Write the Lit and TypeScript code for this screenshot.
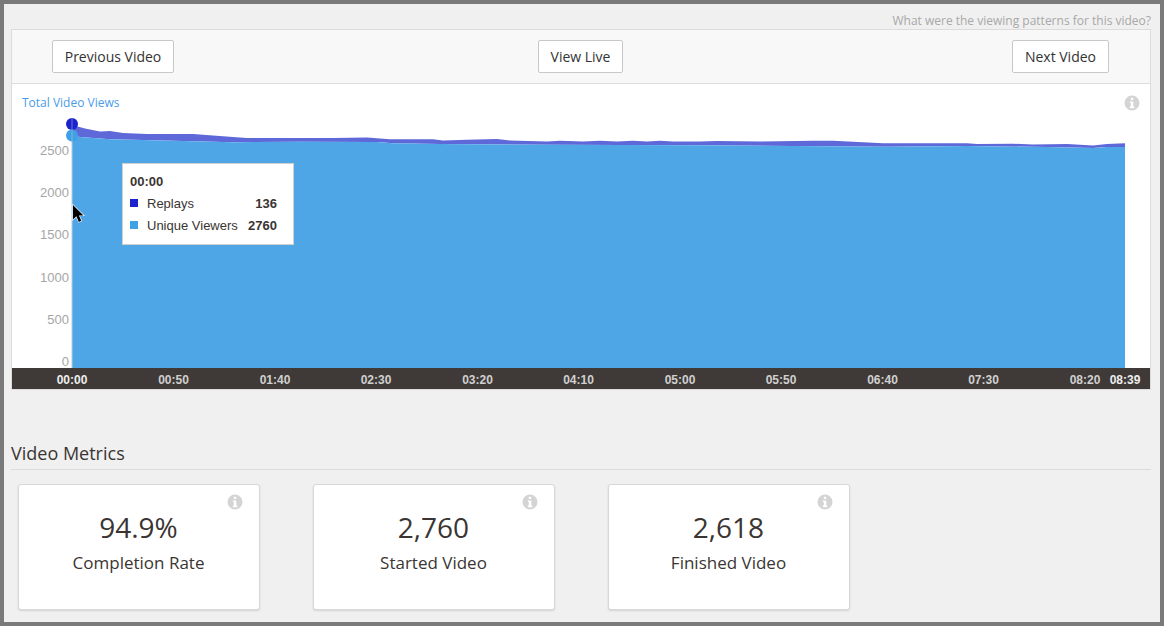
import { LitElement, html, css, svg } from 'lit';
import { customElement } from 'lit/decorators.js';

// chart geometry: svg viewBox uses page coordinates, so these read straight off the reference
const TOP_LINE: number[][] = [
  [72, 125], [85, 128.5], [100, 131.5], [110, 131], [123, 133], [147, 134], [193, 134], [233, 137], [247, 138],
  [300, 138], [333, 138], [367, 137.5], [390, 139.3], [433, 139.3], [443, 140.4], [467, 139.8], [497, 139],
  [510, 140.5], [547, 141.5], [560, 140.8], [583, 141.4], [600, 140.8], [617, 141.4], [633, 140.8], [647, 141.4],
  [660, 140.8], [673, 141.6], [700, 141.5], [717, 141], [760, 141.5], [813, 140.8], [833, 140.8], [883, 143.3],
  [967, 143.3], [977, 144], [1013, 143.7], [1033, 144.4], [1067, 144], [1093, 145.5], [1107, 143.9], [1125, 143.2],
];
const BASE_LINE: number[][] = [
  [72, 135.5], [80, 137], [110, 139.3], [143, 140], [233, 142.3], [300, 141.7], [377, 142], [393, 143.3],
  [440, 144], [547, 144.7], [700, 145.3], [887, 146.7], [967, 146], [1047, 147], [1093, 148], [1107, 147], [1125, 147],
];
const Y_TICKS = [
  { label: '2500', y: 155 },
  { label: '2000', y: 197 },
  { label: '1500', y: 239 },
  { label: '1000', y: 282 },
  { label: '500', y: 324 },
  { label: '0', y: 366 },
];
const X_TICKS = [
  { label: '00:00', x: 72, strong: true },
  { label: '00:50', x: 173.5 },
  { label: '01:40', x: 275 },
  { label: '02:30', x: 376 },
  { label: '03:20', x: 477.5 },
  { label: '04:10', x: 578.5 },
  { label: '05:00', x: 680 },
  { label: '05:50', x: 781 },
  { label: '06:40', x: 882.5 },
  { label: '07:30', x: 983.5 },
  { label: '08:20', x: 1085 },
  { label: '08:39', x: 1125, strong: true },
];
const METRICS = [
  { value: '94.9%', label: 'Completion Rate' },
  { value: '2,760', label: 'Started Video' },
  { value: '2,618', label: 'Finished Video' },
];

const toPath = (pts: number[][]) => pts.map(([x, y]) => `${x},${y}`).join(' L');

const infoIcon = () => html`
  <svg class="info" viewBox="0 0 16 16" width="16" height="16">
    <path
      fill-rule="evenodd"
      d="M8 .5a7.5 7.5 0 1 0 0 15 7.5 7.5 0 0 0 0-15ZM6.8 2.8h2.4v2.3H6.8ZM5.8 6.4h3.5v5.1h1v1.7H5.8v-1.7h1V8.1h-1Z"
    />
  </svg>
`;

@customElement('app-root')
export class AppRoot extends LitElement {
  static styles = css`
    :host {
      display: block;
      box-sizing: border-box;
      width: 1164px;
      height: 626px;
      border: 4px solid #7a7a7a;
      background: #f0f0f0;
      font-family: 'Open Sans', sans-serif;
      color: #3a3532;
      overflow: hidden;
    }

    .question {
      height: 25px;
      line-height: 34px;
      padding-right: 9px;
      text-align: right;
      font-size: 12px;
      color: #a8a8a8;
    }

    .panel {
      margin: 0 9px 0 7px;
      border: 1px solid #dcdcdc;
      background: #fff;
    }

    .toolbar {
      display: grid;
      grid-template-columns: 1fr auto 1fr;
      align-items: center;
      height: 53px;
      padding: 0 41px 0 40px;
      background: #f8f8f8;
      border-bottom: 1px solid #dcdcdc;
    }

    .toolbar button {
      height: 33px;
      padding: 0 12px;
      background: #fff;
      border: 1px solid #c8c8c8;
      border-radius: 2px;
      font: 14px 'Open Sans', sans-serif;
      color: #333;
    }

    .toolbar button:first-child {
      justify-self: start;
      width: 122px;
      padding: 0;
    }

    .toolbar button:last-child {
      justify-self: end;
    }

    .chart {
      position: relative;
    }

    .chart-head {
      display: flex;
      justify-content: space-between;
      align-items: flex-start;
      height: 34px;
      padding: 10px 10px 0 10px;
      box-sizing: border-box;
    }

    .chart-head .info {
      margin-top: 1px;
    }

    .chart-title {
      font-size: 12px;
      line-height: 18px;
      color: #4a9ce8;
    }

    .chart svg.plot {
      display: block;
    }

    .plot text {
      font: 13px 'Liberation Sans', sans-serif;
      fill: #a6a6a6;
      text-anchor: end;
    }

    .info {
      display: block;
      fill: #d4d4d4;
    }

    .tooltip {
      position: absolute;
      left: 110px;
      top: 79px;
      box-sizing: border-box;
      width: 172px;
      height: 82px;
      padding: 10px 16px 0 7px;
      background: #fff;
      border: 1px solid #cfcfcf;
      font: 13px 'Liberation Sans', sans-serif;
      color: #3a3532;
    }

    .tooltip b {
      display: block;
      line-height: 15px;
      margin-bottom: 3px;
    }

    .tip-row {
      display: flex;
      align-items: center;
      height: 22px;
    }

    .tip-row i {
      width: 8px;
      height: 8px;
      margin-right: 9px;
    }

    .tip-row span {
      flex: 1;
    }

    .replays {
      background: #1c22cc;
    }

    .unique {
      background: #3fa0e5;
    }

    .cursor {
      position: absolute;
      left: 60px;
      top: 120px;
    }

    .cursor path {
      paint-order: stroke;
    }

    .axis {
      position: relative;
      height: 21px;
      background: #3f3a37;
    }

    .axis span {
      position: absolute;
      top: 0;
      transform: translateX(-50%);
      font: bold 12px/24px 'Liberation Sans', sans-serif;
      color: #d0d0d0;
    }

    .axis span.strong {
      color: #eeeeee;
    }

    h2 {
      margin: 53px 9px 0 7px;
      height: 26px;
      border-bottom: 1px solid #dcdcdc;
      font-size: 18px;
      font-weight: 400;
      line-height: 21px;
      color: #3a3532;
    }

    .cards {
      display: flex;
      gap: 53px;
      margin: 14px 0 0 14px;
    }

    .card {
      position: relative;
      box-sizing: border-box;
      width: 242px;
      height: 126px;
      padding: 23px 1px 0 0;
      background: #fff;
      border: 1px solid #d8d8d8;
      border-radius: 3px;
      box-shadow: 0 1px 2px rgba(0, 0, 0, 0.12);
      text-align: center;
    }

    .card .info {
      position: absolute;
      top: 9px;
      right: 16px;
    }

    .value {
      font-size: 28px;
      line-height: 38px;
    }

    .label {
      font-size: 17px;
      line-height: 34px;
    }
  `;

  render() {
    const rev = [...BASE_LINE].reverse();
    return html`
      <div class="question">What were the viewing patterns for this video?</div>
      <section class="panel">
        <div class="toolbar">
          <button>Previous Video</button>
          <button>View Live</button>
          <button>Next Video</button>
        </div>
        <div class="chart">
          <div class="chart-head">
            <span class="chart-title">Total Video Views</span>
            ${infoIcon()}
          </div>
          <svg class="plot" width="1138" height="250" viewBox="12 118 1138 250">
            <path d="M${toPath(TOP_LINE)} L${toPath(rev)} Z" fill="#5e68d8" />
            <path d="M${toPath(BASE_LINE)} L1125,368 L72,368 Z" fill="#4fa6e7" />
            <line x1="72" y1="124" x2="72" y2="368" stroke="#b9cad8" stroke-width="1" />
            <circle cx="72" cy="124" r="6" fill="#1c22cc" />
            <circle cx="72" cy="135.5" r="6" fill="#3fa0e5" />
            <line x1="72" y1="118" x2="72" y2="142" stroke="#b9cad8" stroke-opacity="0.5" stroke-width="1" />
            ${Y_TICKS.map((t) => svg`<text x="69" y=${t.y}>${t.label}</text>`)}
          </svg>
          <div class="tooltip">
            <b>00:00</b>
            <div class="tip-row"><i class="replays"></i><span>Replays</span><strong>136</strong></div>
            <div class="tip-row"><i class="unique"></i><span>Unique Viewers</span><strong>2760</strong></div>
          </div>
          <svg class="cursor" width="13" height="20" viewBox="0 0 13 20">
            <path d="M1 1v14.5l3.4-3.2 2.4 5.6 2.5-1.1-2.4-5.4h4.6Z" fill="#000" stroke="#fff" stroke-width="1.2" />
          </svg>
          <div class="axis">
            ${X_TICKS.map(
              (t) => html`<span class=${t.strong ? 'strong' : ''} style="left:${t.x - 12}px">${t.label}</span>`
            )}
          </div>
        </div>
      </section>
      <h2>Video Metrics</h2>
      <div class="cards">
        ${METRICS.map(
          (m) => html`
            <div class="card">
              ${infoIcon()}
              <div class="value">${m.value}</div>
              <div class="label">${m.label}</div>
            </div>
          `
        )}
      </div>
    `;
  }
}

declare global {
  interface HTMLElementTagNameMap {
    'app-root': AppRoot;
  }
}
